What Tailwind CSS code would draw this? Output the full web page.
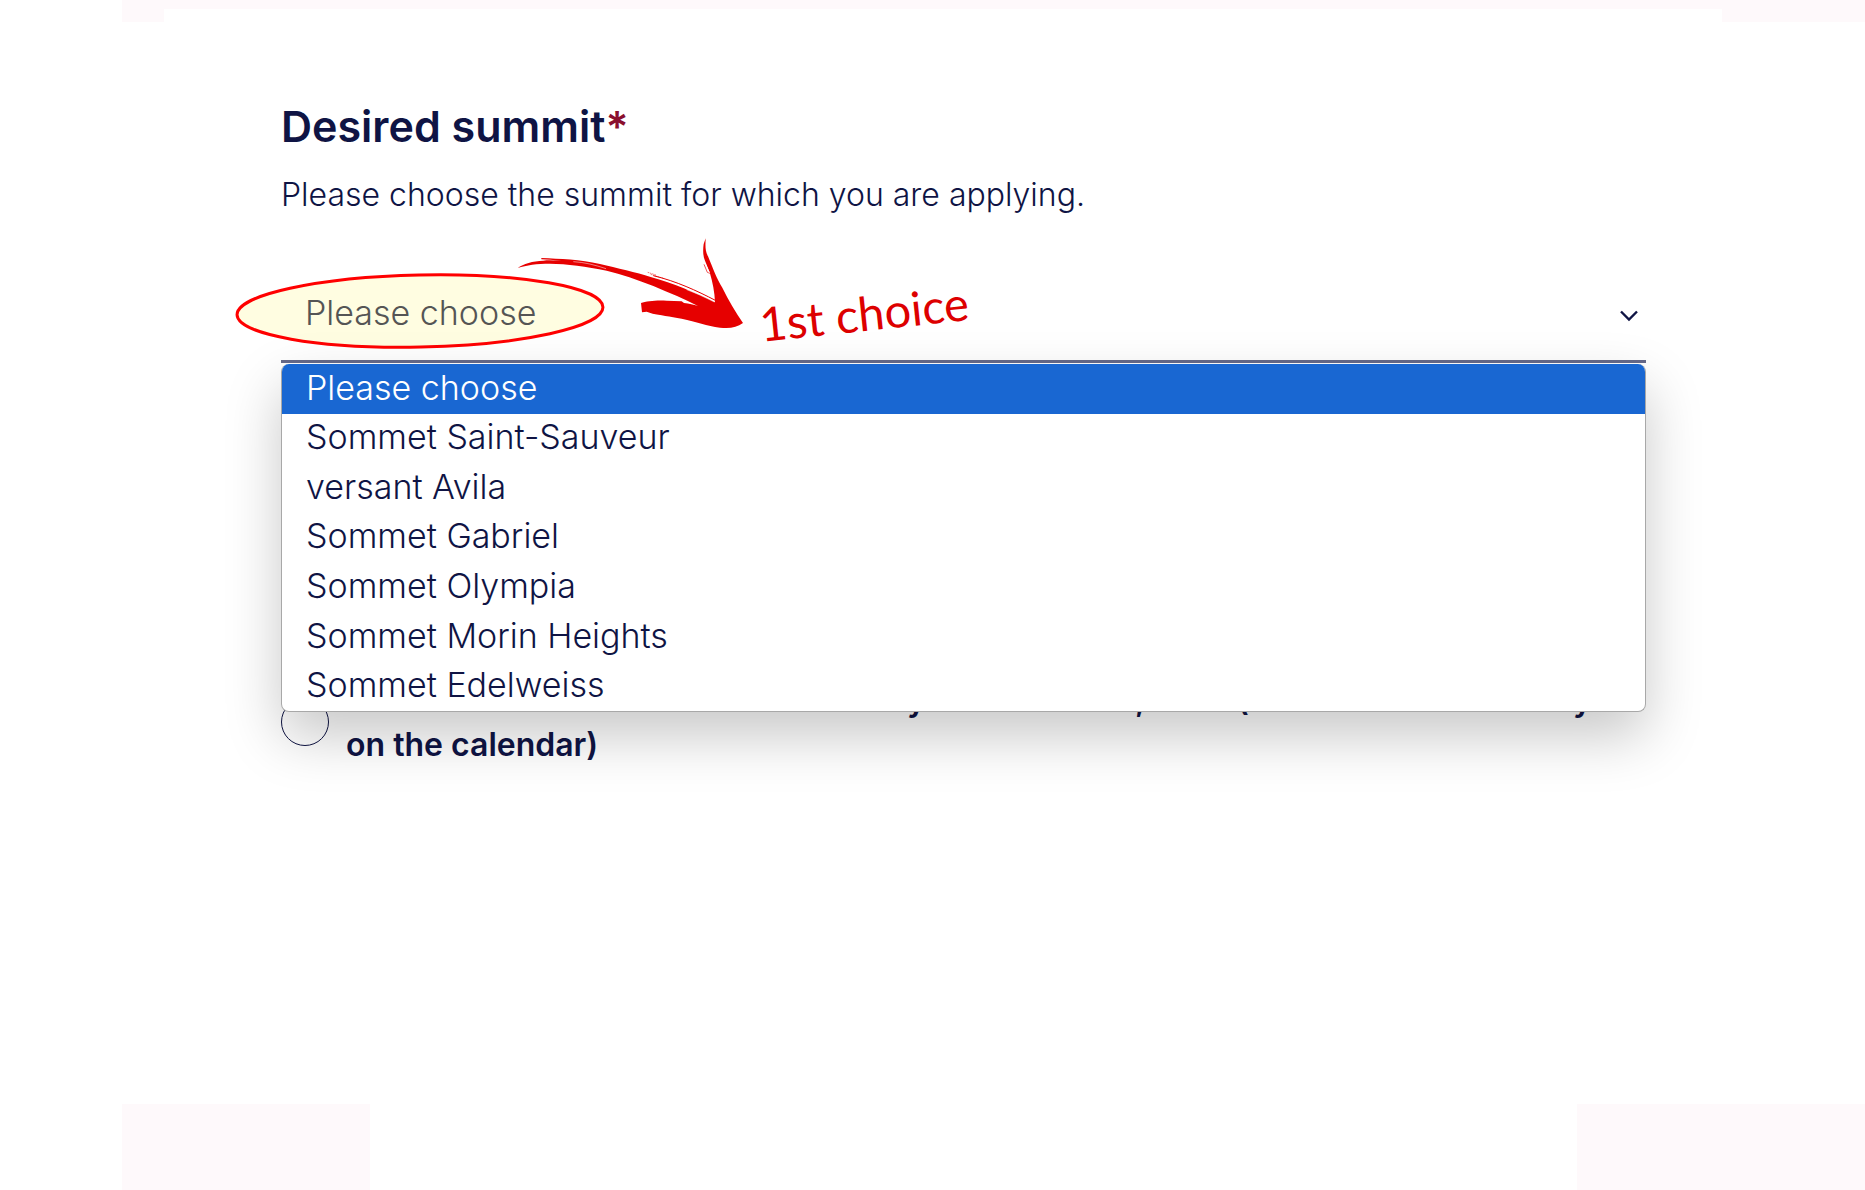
<!DOCTYPE html>
<html lang="en">

<head>
  <meta charset="UTF-8" />
  <meta name="viewport" content="width=device-width, initial-scale=1.0" />
  <title>Desired summit</title>
  <!--Tailwind CSS-->
  <script src="https://cdn.jsdelivr.net/npm/@tailwindcss/browser@4"></script>
</head>

<body class="min-h-screen flex flex-col bg-white text-[#0f1444] font-['Inter',sans-serif]">
  <!--Top band-->
  <div class="flex items-start h-[22px] pl-[122px]">
    <div class="w-[42px] h-[22px] bg-[#fef9fb]"></div>
    <div class="flex-1 h-[9px] bg-[#fef9fb]"></div>
    <div class="w-[143px] h-[22px] bg-[#fef9fb]"></div>
  </div>

  <!--Form-->
  <main class="pt-20 pl-[281px] pr-[219px]">
    <form>
      <label for="summit" class="block text-[43px] leading-12 font-semibold">Desired summit<span
          class="text-[#8a0f2e]">*</span></label>
      <p id="summit-help" class="mt-[25px] text-[32px] leading-10 font-light">Please choose the summit for which you are
        applying.</p>

      <div class="relative mt-[50px]">
        <!-- Highlight behind the current value -->
        <svg class="absolute -left-[46px] top-[7px] w-[370px] h-[78px]" viewBox="0 0 370 78" fill="none">
          <ellipse cx="185" cy="39" rx="183" ry="36" transform="rotate(-1.2 185 39)" fill="#fffde1" stroke="#ff0000"
            stroke-width="3" />
        </svg>

        <select id="summit" aria-describedby="summit-help"
          class="relative block w-full h-[98px] px-6 appearance-none bg-transparent border-b-3 border-[#666a8a] text-[34px] font-light text-[#555555]">
          <option>Please choose</option>
        </select>
        <svg class="absolute right-[7px] top-[45px] w-[20px] h-[12px]" viewBox="0 0 20 12" fill="none" stroke="#0f1444"
          stroke-width="2.4">
          <path d="M2 1.5 L10 9.5 L18 1.5" />
        </svg>

        <!-- Arrow and note -->
        <svg class="absolute left-[236px] -top-[29px] w-[230px] h-[95px]" viewBox="51 51 690 285" fill="#e60000">
          <path
            d="M53 147 C70 134 98 126 130 125 C145 123 165 124 185 126 C160 122 140 122 124 121 L124 117 C180 120 240 121 300 135 C350 147 410 160 452 174 C520 193 590 222 645 250 C644 220 638 190 629 160 L615 125 C608 110 609 90 611 75 L617 58 C616 80 615 95 624 112 C640 150 650 180 667 206 C685 243 707 280 729 312 C710 325 690 330 660 326 C620 320 590 309 545 299 C510 293 478 287 458 284 L440 278 L426 280 L423 252 C440 246 470 243 500 245 L545 247 L552 252 C568 254 580 257 594 261 C555 241 510 222 460 201 C410 181 365 166 320 155 C260 143 200 134 150 134 C110 134 80 138 53 147 Z" />
          <path d="M460 170 C530 187 590 215 646 244" fill="none" stroke="#e60000" stroke-width="3" />
          <path d="M443 160 L468 168 M452 166 L490 178" fill="none" stroke="#e60000" stroke-width="1.5"
            stroke-dasharray="5 2" />
          <path d="M220 128 C255 130 285 138 318 149 M560 212 C590 223 615 235 643 249" fill="none" stroke="#ffffff"
            stroke-width="1.5" />
          <path d="M612 136 L622 160 L630 163" fill="none" stroke="#e60000" stroke-width="2" />
          <path d="M616 135 L628 161" fill="none" stroke="#ffffff" stroke-width="3" />
        </svg>
        <p
          class="absolute left-[478px] top-[24px] -rotate-6 text-[47px] leading-12 whitespace-nowrap text-[#dd0000] font-['Lato',cursive]">
          1st choice</p>

        <!-- Open list -->
        <ul role="listbox" aria-label="Desired summit"
          class="absolute z-10 inset-x-0 top-full mt-px grid auto-rows-fr h-[348px] overflow-hidden bg-white border border-t-0 border-[#a8a8a8] rounded-lg text-[34px] leading-10 font-light shadow-[0_24px_56px_rgba(0,0,0,0.22)]">
          <li role="option" aria-selected="true" class="flex items-center px-6 pb-0.5 bg-[#1967d2] text-white">Please
            choose</li>
          <li role="option" class="flex items-center px-6 pb-0.5">Sommet Saint-Sauveur</li>
          <li role="option" class="flex items-center px-6 pb-0.5">versant Avila</li>
          <li role="option" class="flex items-center px-6 pb-0.5">Sommet Gabriel</li>
          <li role="option" class="flex items-center px-6 pb-0.5">Sommet Olympia</li>
          <li role="option" class="flex items-center px-6 pb-0.5">Sommet Morin Heights</li>
          <li role="option" class="flex items-center px-6 pb-0.5">Sommet Edelweiss</li>
        </ul>
      </div>

      <!-- Availability -->
      <div class="mt-[233px]">
        <input type="radio" name="availability" aria-label="Availability"
          class="block size-12 appearance-none rounded-full border border-[#0f1444]" />
      </div>
      <div class="mt-[33px] flex gap-[17px]">
        <input type="radio" name="availability" id="calendar"
          class="mt-[21px] size-12 shrink-0 appearance-none rounded-full border border-[#0f1444]" />
        <label for="calendar" class="flex-1 text-[32px] leading-[45px] font-semibold">
          <span class="flex">
            <span class="w-[228px] ml-[561px]">y</span>
            <span class="w-[102px]">,</span>
            <span class="w-[336px]">(</span>
            <span>y</span>
          </span>
          on the calendar)
        </label>
      </div>
    </form>
  </main>

  <!--Bottom band-->
  <div class="mt-auto flex justify-between pl-[122px]">
    <div class="w-[248px] h-[86px] bg-[#fef9fb]"></div>
    <div class="w-[288px] h-[86px] bg-[#fef9fb]"></div>
  </div>
</body>

</html>
